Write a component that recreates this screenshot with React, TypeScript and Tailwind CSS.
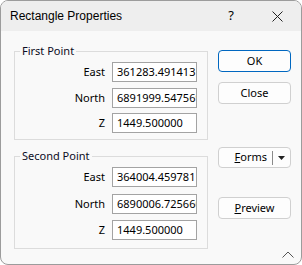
import React from "react";

const bodyFont = { fontFamily: '"Noto Sans", "Liberation Sans", sans-serif' };

function Field({ label, value }: { label: string; value: string }) {
  return (
    <div className="flex items-center justify-end gap-[7px]">
      <span className="text-[11px] leading-[14px] text-black">{label}</span>
      <div className="w-[85px] h-[20px] border border-[#a3a3a3] bg-white overflow-hidden whitespace-nowrap pl-[4px] text-[11px] leading-[18px] text-black">
        {value}
      </div>
    </div>
  );
}

function Group({
  title,
  rows,
  gap,
  pb,
}: {
  title: string;
  rows: [string, string][];
  gap: string;
  pb: string;
}) {
  return (
    <fieldset className={`w-[194px] border border-[#dcdcdc] pr-[10px] ${pb}`}>
      <legend className="ml-[5px] px-[2px] text-[11px] leading-[14px] text-[#0c0c24]">{title}</legend>
      <div className={`flex flex-col pt-[4px] ${gap}`}>
        {rows.map(([l, v]) => (
          <Field key={l} label={l} value={v} />
        ))}
      </div>
    </fieldset>
  );
}

function Btn({ children, primary }: { children: React.ReactNode; primary?: boolean }) {
  return (
    <div
      className={`w-[73px] h-[22px] rounded-[4px] flex items-center justify-center text-[11px] text-black bg-[#fdfdfd] border ${
        primary ? "border-[#0067c0]" : "border-[#d0d0d0]"
      }`}
    >
      {children}
    </div>
  );
}

export default function App() {
  return (
    <div
      className="w-[302px] h-[265px] flex flex-col border border-[#9c9c9c] rounded-[8px] overflow-hidden bg-[#f9f9f9]"
      style={bodyFont}
    >
      <div className="h-[30px] shrink-0 bg-[#eeeeee] flex items-center pl-[9px]">
        <span className="text-[12px] text-black" style={{ fontFamily: '"Liberation Sans", sans-serif' }}>
          Rectangle Properties
        </span>
        <span className="ml-auto text-[13px] text-black mr-[38px]">?</span>
        <svg width="11" height="11" viewBox="0 0 11 11" className="mr-[18px]">
          <path d="M0.5 0.5 L10.5 10.5 M10.5 0.5 L0.5 10.5" stroke="#222" strokeWidth="1" />
        </svg>
      </div>
      <div className="flex flex-1">
        <div className="pl-[13px] pt-[13px] flex flex-col gap-[9px]">
          <Group
            title="First Point"
            gap="gap-[5.5px]"
            pb="pb-[6px]"
            rows={[
              ["East", "361283.491413"],
              ["North", "6891999.547569"],
              ["Z", "1449.500000"],
            ]}
          />
          <Group
            title="Second Point"
            gap="gap-[6.5px]"
            pb="pb-[8px]"
            rows={[
              ["East", "364004.459781"],
              ["North", "6890006.725660"],
              ["Z", "1449.500000"],
            ]}
          />
        </div>
        <div className="pl-[10px] pt-[19px] flex flex-col">
          <Btn primary>OK</Btn>
          <div className="mt-[10px]">
            <Btn>Close</Btn>
          </div>
          <div className="mt-[43px] w-[73px] h-[21px] rounded-[4px] border border-[#d0d0d0] bg-[#fdfdfd] flex items-center text-[11px] text-black">
            <span className="flex-1 text-right pr-[5px]">
              <span className="underline">F</span>orms
            </span>
            <span className="w-px h-[14px] bg-[#8a8a8a]" />
            <svg width="17" height="8" viewBox="0 0 17 8">
              <path d="M5 2 L12 2 L8.5 6 Z" fill="#222" />
            </svg>
          </div>
          <div className="mt-[29px]">
            <Btn>
              <span>
                <span className="underline">P</span>review
              </span>
            </Btn>
          </div>
          <div className="mt-auto mb-[6px] flex justify-end mr-[-3px]">
            <svg width="12" height="7" viewBox="0 0 12 7">
              <path d="M0.5 6.5 L6 1 L11.5 6.5" stroke="#555" strokeWidth="1" fill="none" />
            </svg>
          </div>
        </div>
      </div>
    </div>
  );
}
